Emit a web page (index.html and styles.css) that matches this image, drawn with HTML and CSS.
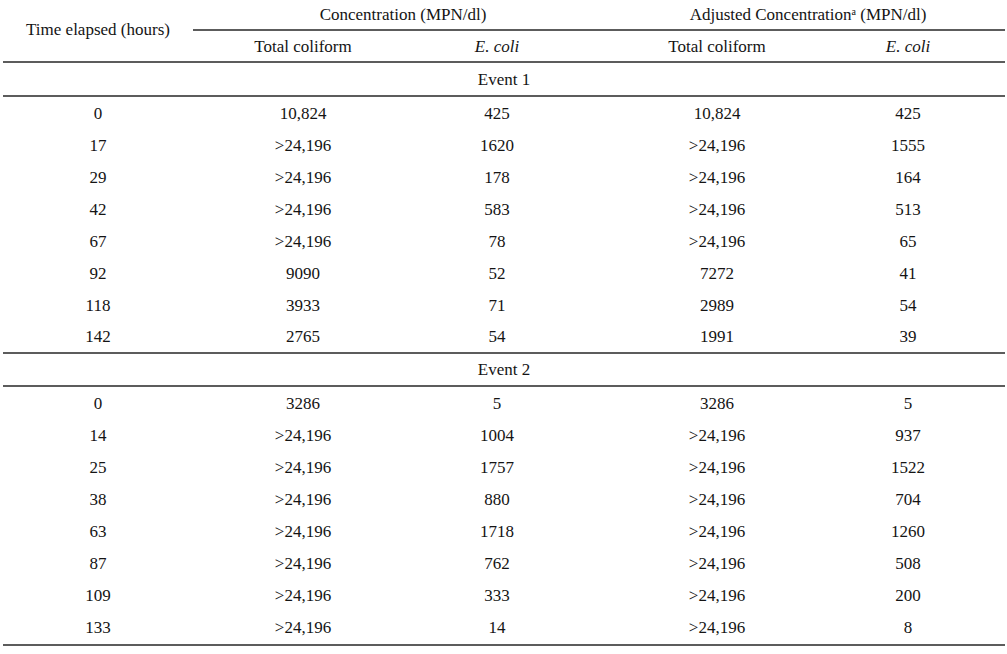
FILE: index.html
```html
<!DOCTYPE html>
<html lang="en">
<head>
<meta charset="utf-8">
<title>Coliform concentration table</title>
<link rel="stylesheet" href="styles.css">
</head>
<body>
<table class="data">
  <colgroup>
    <col class="c-time">
    <col class="c-tc">
    <col class="c-ec">
    <col class="c-atc">
    <col class="c-aec">
  </colgroup>
  <thead>
    <tr class="h1">
      <th rowspan="2" class="time-head">Time elapsed (hours)</th>
      <th colspan="2" class="group g1">Concentration (MPN/dl)</th>
      <th colspan="2" class="group g2">Adjusted Concentration<sup>a</sup> (MPN/dl)</th>
    </tr>
    <tr class="h2">
      <th>Total coliform</th>
      <th><i>E. coli</i></th>
      <th>Total coliform</th>
      <th class="last"><i>E. coli</i></th>
    </tr>
  </thead>
  <tbody>
    <tr class="event ev1"><td colspan="5">Event 1</td></tr>
    <tr><td>0</td><td>10,824</td><td>425</td><td>10,824</td><td class="last">425</td></tr>
    <tr><td>17</td><td>&gt;24,196</td><td>1620</td><td>&gt;24,196</td><td class="last">1555</td></tr>
    <tr><td>29</td><td>&gt;24,196</td><td>178</td><td>&gt;24,196</td><td class="last">164</td></tr>
    <tr><td>42</td><td>&gt;24,196</td><td>583</td><td>&gt;24,196</td><td class="last">513</td></tr>
    <tr><td>67</td><td>&gt;24,196</td><td>78</td><td>&gt;24,196</td><td class="last">65</td></tr>
    <tr><td>92</td><td>9090</td><td>52</td><td>7272</td><td class="last">41</td></tr>
    <tr><td>118</td><td>3933</td><td>71</td><td>2989</td><td class="last">54</td></tr>
    <tr class="end1"><td>142</td><td>2765</td><td>54</td><td>1991</td><td class="last">39</td></tr>
    <tr class="event ev2"><td colspan="5">Event 2</td></tr>
    <tr><td>0</td><td>3286</td><td>5</td><td>3286</td><td class="last">5</td></tr>
    <tr><td>14</td><td>&gt;24,196</td><td>1004</td><td>&gt;24,196</td><td class="last">937</td></tr>
    <tr><td>25</td><td>&gt;24,196</td><td>1757</td><td>&gt;24,196</td><td class="last">1522</td></tr>
    <tr><td>38</td><td>&gt;24,196</td><td>880</td><td>&gt;24,196</td><td class="last">704</td></tr>
    <tr><td>63</td><td>&gt;24,196</td><td>1718</td><td>&gt;24,196</td><td class="last">1260</td></tr>
    <tr><td>87</td><td>&gt;24,196</td><td>762</td><td>&gt;24,196</td><td class="last">508</td></tr>
    <tr><td>109</td><td>&gt;24,196</td><td>333</td><td>&gt;24,196</td><td class="last">200</td></tr>
    <tr class="end2"><td>133</td><td>&gt;24,196</td><td>14</td><td>&gt;24,196</td><td class="last">8</td></tr>
  </tbody>
</table>
</body>
</html>
```
FILE: styles.css
```css
html, body {
  margin: 0;
  padding: 0;
  background: #ffffff;
}

body {
  font-family: "Liberation Serif", "Times New Roman", serif;
  font-size: 17px;
  color: #141414;
}

.data {
  margin-left: 3px;
  width: 1002px;
  table-layout: fixed;
  border-collapse: separate;
  border-spacing: 0;
}

.c-time { width: 190px; }
.c-tc { width: 220px; }
.c-ec { width: 168px; }
.c-atc { width: 272px; }
.c-aec { width: 152px; }

.data th,
.data td {
  box-sizing: border-box;
  padding: 0;
  text-align: center;
  vertical-align: middle;
  font-weight: normal;
  line-height: 19px;
  height: 32px;
}

.data .last {
  padding-right: 42px;
}

.data .h1 th {
  height: 31px;
}

.data .group {
  border-bottom: 2px solid #5c5c5c;
}

.data .g1 { padding-left: 32px; }
.data .g2 { padding-left: 30px; }

.data sup {
  font-size: 10px;
  line-height: 0;
  vertical-align: 5px;
}

.data .h2 th,
.data .time-head {
  border-bottom: 2px solid #5c5c5c;
}

.data .time-head {
  padding-bottom: 2px;
}

.data .h2 th {
  height: 32px;
}

.data .ev1 td {
  height: 34px;
  border-bottom: 2px solid #5c5c5c;
}

.data .end1 td {
  height: 33px;
  border-bottom: 2px solid #5c5c5c;
}

.data .ev2 td {
  height: 33px;
  border-bottom: 2px solid #5c5c5c;
}

.data .end2 td {
  height: 35px;
  border-bottom: 2px solid #5c5c5c;
}
```
